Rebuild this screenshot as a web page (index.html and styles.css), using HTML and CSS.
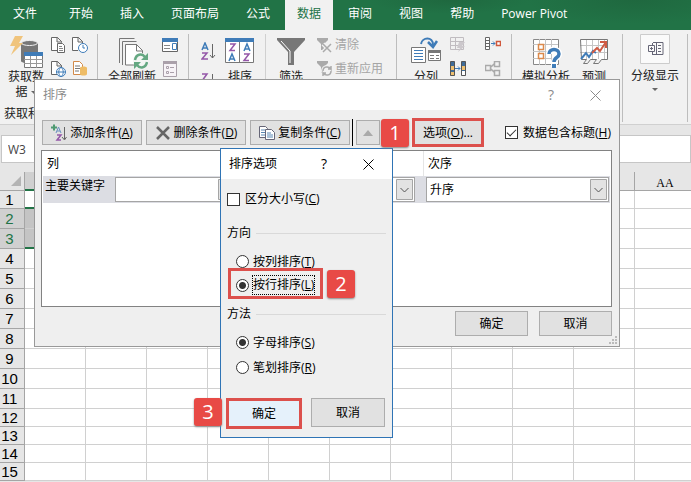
FILE: index.html
```html
<!DOCTYPE html>
<html lang="zh-CN">
<head>
<meta charset="utf-8">
<title>排序</title>
<link rel="stylesheet" href="styles.css">
</head>
<body>
<nav class="tabs">
  <a href="#">文件</a><a href="#">开始</a><a href="#">插入</a><a href="#">页面布局</a><a href="#">公式</a><a href="#" class="active">数据</a><a href="#">审阅</a><a href="#">视图</a><a href="#">帮助</a><a href="#">Power Pivot</a>
</nav>

<section class="ribbon">
  <div class="group g-get">
    <button class="big">
      <svg width="34" height="34" viewBox="0 0 34 34"><path d="M12 8v18c0 3 17 3 17 0V8z" fill="#777"/><ellipse cx="20.500" cy="8" rx="8" ry="2.500" fill="#777" stroke="#f1f1f1"/><path d="M6 1h8l-4 7h4L2 20l4-9H1z" fill="#f0c47c"/><path d="M15.500 17.500h18v15h-18z" fill="#fff" stroke="#777"/><path d="M15 17h19v4H15z" fill="#3f7cb8"/><path d="M15 24.500h19M15 28.500h19M21.500 21v12M27.500 21v12" stroke="#999"/></svg>
      <span>获取数<br>据 <i class="caret"></i></span>
    </button>
    <div class="minis two">
      <button aria-label="从文本"><svg width="16" height="16"><path d="M7.500 13.500h-7v-13h6l4 4v1M6 0v5h5" fill="#fff" stroke="#666"/><path d="M6.500 6.500h5l2 2v7h-7z" fill="#fff" stroke="#666"/><path d="M8 9.500h3M8 11.500h4M8 13.500h4" stroke="#888"/></svg></button>
      <button aria-label="最近使用的源"><svg width="16" height="16"><path d="M6 13.500H.5V.5h6l4 4V6M6 0v5h5" fill="#fff" stroke="#666"/><circle cx="11" cy="11" r="4.500" fill="#fff" stroke="#3f7cb8"/><path d="M11 8v3h2" fill="none" stroke="#3f7cb8"/></svg></button>
      <button aria-label="自网站"><svg width="16" height="16"><path d="M6 13.500H.5V.5h6l4 4V6M6 0v5h5" fill="#fff" stroke="#666"/><circle cx="10" cy="11" r="4.500" fill="#fff" stroke="#3f7cb8"/><path d="M5 11h10M10 6c-3 3-3 7 0 10 3-3 3-7 0-10" fill="none" stroke="#3f7cb8"/></svg></button>
      <button aria-label="现有连接"><svg width="16" height="16"><path d="M1.500.5h6l3 3v10h-9z" fill="#fff" stroke="#d28a4a"/><path d="M3 5h5M3 7.500h5M3 10h4" stroke="#777"/><path d="M8 7v6c0 2 7 2 7 0V7c0-2-7-2-7 0" fill="#eebc66"/></svg></button>
    </div>
    <div class="group-label">获取和转换数据</div>
  </div>

  <div class="group g-refresh">
    <button class="big wide">
      <svg width="32" height="34"><path d="M3.500 28V3.500h15M6.500 30V6.500h14" fill="none" stroke="#777"/><path d="M9.500 30V9.500h11l6 6V30z" fill="#fff" stroke="#777"/><path d="M20.500 9v7h6" fill="none" stroke="#777"/><circle cx="25" cy="26" r="8" fill="#f4f6f4"/><path d="M19 25c1-6 7-7 10-3M31 27c-1 6-7 7-10 3" fill="none" stroke="#65a882" stroke-width="2.500"/><path d="M32 18v7h-7zM18 34v-7h7z" fill="#65a882"/></svg>
      <span>全部刷新</span>
    </button>
    <div class="minis">
      <button aria-label="查询和连接"><svg width="16" height="16"><path d="M.5 2.500h15v12H.5z" fill="#fff" stroke="#666"/><path d="M0 1h16v4H0z" fill="#3f7cb8"/><path d="M2 8.500h6M2 11.500h6" stroke="#888"/><path d="M10.500 6.500v6h4v-6z" fill="#fff" stroke="#3f7cb8"/></svg></button>
      <button aria-label="属性" disabled><svg width="16" height="16"><path d="M1.500.5h13v15h-13z" fill="#f7f3f7" stroke="#aaa0aa"/><path d="M1 0h14v3H1z" fill="#aaa0aa"/><path d="M4.500 5.500h2v2h-2zM4.500 10.500h2v2h-2z" fill="none" stroke="#aaa0aa"/><path d="M8 6.500h4M8 11.500h4" stroke="#aaa0aa"/></svg></button>
    </div>
  </div>

  <div class="group g-sort">
    <div class="minis az">
      <button aria-label="升序"><svg width="16" height="20"><path d="M1 8l3-7 3 7M2 6h4" fill="none" stroke="#3f7cb8" stroke-width="1.500"/><path d="M1 11h5L1 17h6" fill="none" stroke="#9457a8" stroke-width="1.500"/><path d="M11.500 2v14M9 13l2.500 3 2.500-3" fill="none" stroke="#666"/></svg></button>
      <button aria-label="降序"><svg width="16" height="20"><path d="M1 1h5L1 8h6" fill="none" stroke="#9457a8" stroke-width="1.500"/><path d="M1 18l3-7 3 7M2 16h4" fill="none" stroke="#3f7cb8" stroke-width="1.500"/><path d="M11.500 1v15M9 13l2.500 3 2.500-3" fill="none" stroke="#666"/></svg></button>
    </div>
    <button class="big">
      <svg width="30" height="34"><path d="M.5 4.500h28v23H.5z" fill="#fff" stroke="#777"/><path d="M0 3h29v4H0z" fill="#3f7cb8"/><path d="M14.500 7v21" stroke="#777"/><path d="M5 9h5l-5 6.500h5M19 19h5l-5 6.500h5" fill="none" stroke="#9457a8" stroke-width="1.500"/><path d="M4 26l3-7 3 7M5 24h4M19 16l3-7 3 7M20 14h4" fill="none" stroke="#3f7cb8" stroke-width="1.500"/></svg>
      <span>排序</span>
    </button>
    <i class="rule"></i>
    <button class="big">
      <svg width="28" height="34"><path d="M0 3h28v2L17 17v13h-6V17L0 5z" fill="#777"/><path d="M4 6l9 10v12" fill="none" stroke="#fff"/></svg>
      <span>筛选</span>
    </button>
    <div class="minis texts">
      <button disabled><svg width="16" height="16"><path d="M0 1h11v2L7 7v6H4V7L0 3z" fill="#aaa"/><path d="M6 7l8 8M14 7l-8 8" stroke="#f1f1f1" stroke-width="4"/><path d="M6 7l8 8M14 7l-8 8" stroke="#aaa" stroke-width="1.500"/></svg>清除</button>
      <button disabled><svg width="16" height="16"><path d="M0 0h11v2L7 6v6H4V6L0 2z" fill="#aaa"/><circle cx="10" cy="10" r="6" fill="#f1f1f1"/><path d="M6 10c0-5 6-5 8-2V5M14 10c0 5-6 5-8 2v3M14 8h-3M6 12h3" fill="none" stroke="#aaa" stroke-width="1.500"/></svg>重新应用</button>
    </div>
  </div>

  <div class="group g-tools">
    <button class="big">
      <svg width="30" height="34"><path d="M.5 12.500h14v15H.5zM17.500 15.500h12v10h-12z" fill="#fff" stroke="#777"/><path d="M17 15h13v3H17z" fill="#777"/><path d="M3 15.500h9M3 18.500h9M3 21.500h9M3 24.500h9" stroke="#3f7cb8"/><path d="M19 20.500h4M25 20.500h3M19 23.500h4M25 23.500h3" stroke="#777"/><path d="M10 9c1-7 12-8 12 1" fill="none" stroke="#3f7cb8" stroke-width="2"/><path d="M17 7l5 5 4-6" fill="none" stroke="#3f7cb8" stroke-width="2.500"/></svg>
      <span>分列</span>
    </button>
    <div class="minis">
      <button aria-label="快速填充" disabled><svg width="16" height="16"><path d="M.5.500h13v12H.5zM0 4.500h14M0 8.500h10M5.500 0v12" fill="none" stroke="#c0bcc0"/><path d="M9 5h6l-3 4h3l-7 6 2-4H7z" fill="#ccc8cc"/></svg></button>
      <button aria-label="删除重复值"><svg width="16" height="16"><path d="M.5.500h4v14h-4zM11.500.500h4v14h-4z" fill="#3f6c98" stroke="#555"/><path d="M1 5h3v4H1zM1 11h3v3H1zM12 5h3v4h-3z" fill="#efc070"/><path d="M12 10h3v4h-3z" fill="#fff"/><path d="M5 7.500h5M8 5.500l2 2-2 2" fill="none" stroke="#3f7cb8"/></svg></button>
    </div>
    <div class="minis">
      <button aria-label="合并计算"><svg width="16" height="16"><path d="M.5.500h4v12h-4zM0 3.500h4M0 6.500h4M0 9.500h4" fill="#fff" stroke="#666"/><path d="M6 6.500h4M8 4.500l2 2-2 2" fill="none" stroke="#3f7cb8"/><path d="M11.500 4.500h4v4h-4z" fill="#fff" stroke="#d0583c" stroke-width="1.500"/></svg></button>
      <button aria-label="关系" disabled><svg width="16" height="16"><path d="M.5 4.500h5v5h-5zM9.500.500h5v5h-5zM9.500 9.500h5v5h-5zM6 6l3-3M6 8l3 3" fill="none" stroke="#aaa" stroke-width="1.500"/></svg></button>
    </div>
  </div>

  <div class="group g-forecast">
    <button class="big wide">
      <svg width="32" height="34"><path d="M3.500 4.500h25v25h-25z" fill="#fff" stroke="#888"/><path d="M9.500 4v26M15.500 4v26M21.500 4v26M3 9.500h25M3 16.500h25M3 23.500h25" fill="none" stroke="#c4c4c4"/><path d="M8.500 9.500h5v5h-5zM8.500 18.500h5v5h-5z" fill="#fff" stroke="#dc8a4c" stroke-width="1.500"/><path d="M19 19c0-6 10-6 10 0 0 4-5 4-5 8v5" fill="none" stroke="#fff" stroke-width="6"/><path d="M19 19c0-6 10-6 10 0 0 4-5 3-5 8" fill="none" stroke="#3f7cb8" stroke-width="3.500"/><path d="M22 29h4v4h-4z" fill="#3f7cb8"/></svg>
      <span>模拟分析</span>
    </button>
    <button class="big">
      <svg width="28" height="34"><path d="M.5 4.500h27v20H.5z" fill="#fff"/><path d="M6.500 4v20M12.500 4v20M18.500 4v20M24.500 4v20M0 10.500h28M0 17.500h28" fill="none" stroke="#c4c4c4"/><path d="M.5 4.500h27v20h-6l-3 4h-5l3-4h-6l-3 4h-4l3-4h-5z" fill="none" stroke="#777"/><path d="M1 24l5-6 3 4 4-6 3 2" fill="none" stroke="#3f7cb8" stroke-width="2"/><path d="M12 18l5-5 3 3 6-9M20 7h6v6" fill="none" stroke="#cf5b44" stroke-width="2"/></svg>
      <span>预测</span>
    </button>
  </div>

  <div class="group g-outline">
    <button class="big wide outline">
      <svg width="30" height="30"><path d="M.5.500h29v29H.500z" fill="#fafafa" stroke="#ccc"/><path d="M13 8.500h10v12H13M8.500 11.500h6v6h-6zM10 14.500h3M11.500 13v3M16.500 9v12M12.500 9v2M12.500 18v3" fill="none" stroke="#667"/><path d="M18 11.500h3M18 14.500h3M18 17.500h3" stroke="#667"/></svg>
      <span>分级显示</span><i class="caret"></i>
    </button>
  </div>
</section>

<div class="formula-bar">
  <input class="name-box" aria-label="名称框" value="W3">
  <input class="formula" aria-label="编辑栏">
</div>

<main class="sheet"><table>
  <thead><tr><th class="corner"><svg width="10" height="10"><path d="M10 0v10H0z" fill="#b4b4b4"/></svg></th></tr></thead>
  <tbody></tbody>
</table></main>

<section class="dialog sort" role="dialog" aria-label="排序">
  <header><h2>排序</h2><button aria-label="帮助">?</button><button aria-label="关闭"><svg width="11" height="11"><path d="M.5.500l10 10M10.500.500l-10 10" stroke="currentColor"/></svg></button></header>
  <div class="toolbar">
    <button class="btn"><svg width="16" height="17"><path d="M0 3.500h6M3 .5v6" stroke="#4f9a72" stroke-width="2"/><path d="M5 9l2.500-6L10 9M6 7h3" fill="none" stroke="#6a92c0"/><path d="M6 11h4l-4 5h4" fill="none" stroke="#9457a8" stroke-width="1.500"/><path d="M13.500 3v12M11 13l2.500 3 2-3" fill="none" stroke="#666"/></svg><span>添加条件(<u>A</u>)</span></button>
    <button class="btn"><svg width="16" height="16"><path d="M2 2l12 12M14 2L2 14" stroke="#666" stroke-width="2.500"/></svg><span>删除条件(<u>D</u>)</span></button>
    <button class="btn"><svg width="16" height="16"><path d="M.5 1.500h6l2 2v9h-8z" fill="#fff" stroke="#667"/><path d="M2 5h4M2 7.500h4M2 10h4" stroke="#5a88b4"/><path d="M6.500 4.500h6l3 3v7h-9z" fill="#fff" stroke="#667"/><path d="M8 8h4M8 10h6M8 12h6" stroke="#5a88b4"/></svg><span>复制条件(<u>C</u>)</span></button>
    <i class="divider"></i>
    <button class="btn move" aria-label="上移" disabled><svg width="10" height="6"><path d="M0 6l5-6 5 6z" fill="#aaa"/></svg></button>
    <button class="btn move" aria-label="下移" disabled><svg width="10" height="6"><path d="M0 0l5 6 5-6z" fill="#aaa"/></svg></button>
    <button class="btn options marked"><span>选项(<u>O</u>)...</span></button>
    <label class="check"><input type="checkbox" checked><span>数据包含标题(<u>H</u>)</span></label>
  </div>
  <div class="levels">
    <div class="levels-head"><span>列</span><span></span><span>次序</span></div>
    <div class="level">
      <label for="key">主要关键字</label>
      <div class="combo"><select id="key"><option></option></select><svg width="17" height="21"><use href="#drop"/></svg></div>
      <div class="combo"><select aria-label="排序依据"><option></option></select><svg width="17" height="21"><use href="#drop"/></svg></div>
      <div class="combo order"><select aria-label="次序"><option>升序</option></select><svg width="17" height="21"><g id="drop"><path d="M.5.500h16v20H.5z" fill="#e3e3e3" stroke="#a5a5a5"/><path d="M4.500 9l4 4 4-4" fill="none" stroke="#555"/></g></svg></div>
    </div>
  </div>
  <footer><button class="btn">确定</button><button class="btn">取消</button></footer>
  <svg class="grip" width="9" height="9"><path d="M6 0h2v2H6zM3 3h2v2H3zM6 3h2v2H6zM0 6h2v2H0zM3 6h2v2H3zM6 6h2v2H6z" fill="#bbb"/></svg>
</section>

<section class="dialog opts" role="dialog" aria-label="排序选项">
  <header><h2>排序选项</h2><button aria-label="帮助">?</button><button aria-label="关闭"><svg width="11" height="11"><path d="M.5.500l10 10M10.500.500l-10 10" stroke="currentColor"/></svg></button></header>
  <div class="opts-body">
    <label class="check"><input type="checkbox"><span>区分大小写(<u>C</u>)</span></label>
    <div class="section">方向</div>
    <label class="radio"><input type="radio" name="dir"><span>按列排序(<u>T</u>)</span></label>
    <label class="radio marked"><input type="radio" name="dir" checked><span class="focus">按行排序(<u>L</u>)</span></label>
    <div class="section method">方法</div>
    <label class="radio"><input type="radio" name="method" checked><span>字母排序(<u>S</u>)</span></label>
    <label class="radio"><input type="radio" name="method"><span>笔划排序(<u>R</u>)</span></label>
    <div class="actions"><button class="btn primary marked">确定</button><button class="btn">取消</button></div>
  </div>
</section>

<span class="badge one">1</span>
<span class="badge two-b">2</span>
<span class="badge three">3</span>
<script src="script.js"></script>
</body>
</html>
```
FILE: styles.css
```css
* { box-sizing: border-box; }
body {
  margin: 0;
  height: 100vh;
  overflow: hidden;
  position: relative;
  display: flex;
  flex-direction: column;
  background: #e6e6e6;
  color: #222;
  font: 12px/16px "Open Sans", "Noto Sans CJK SC", sans-serif;
}
button, input, select { font: inherit; color: inherit; }
button { padding: 0; border: 0; background: none; }
svg { display: block; flex: none; }
h2 { margin: 0; font: inherit; }

/* Ribbon tabs */
.tabs {
  flex: none;
  display: flex;
  height: 30px;
  padding-left: 1px;
  background:
    radial-gradient(ellipse 110px 24px at 92% 0, #1f683f, transparent),
    radial-gradient(ellipse 80px 14px at 65% 0, #1f683f, transparent),
    #217346;
}
.tabs a { color: #fff; text-decoration: none; line-height: 28px; padding: 0 12px; }
.tabs a:nth-child(2) { margin-left: 8px; }
.tabs a:nth-child(n+3) { margin-left: 3px; }
.tabs a.active { background: #f1f1f1; color: #217346; }

/* Ribbon */
.ribbon {
  flex: none;
  display: flex;
  height: 95px;
  padding: 4px 0 2px;
  background: #f1f1f1;
  border-bottom: 1px solid #d0d0d0;
}
.group {
  display: flex;
  align-items: flex-start;
  position: relative;
  flex: none;
  border-right: 1px solid #bdbdbd;
}
.g-get { width: 98px; padding-left: 6px; gap: 5px; }
.g-refresh { width: 91px; padding-left: 10px; gap: 6px; }
.g-sort { width: 208px; padding-left: 12px; }
.g-tools { width: 115px; padding-left: 14px; gap: 9px; }
.g-tools .minis + .minis { margin-left: 10px; }
.g-forecast { width: 111px; padding-left: 10px; gap: 10px; }
.g-outline { width: 65px; padding-left: 8px; }
.big {
  display: flex;
  flex-direction: column;
  align-items: center;
  line-height: 15px;
  padding-top: 1px;
  white-space: nowrap;
}
.g-get .big { width: 40px; }
.wide { width: 48px; }
.outline { padding-top: 0; }
.outline span { margin-top: 4px; }
.outline .caret { margin-top: 5px; }
.caret {
  display: inline-block;
  border: 3px solid transparent;
  border-top: 3px solid #666;
  border-bottom: 0;
  vertical-align: middle;
}
.minis { display: grid; gap: 8px 5px; padding-top: 3px; }
.minis.two { grid-template-columns: 16px 16px; }
.minis.az { gap: 11px; padding-top: 8px; margin-right: 8px; }
.rule { width: 1px; height: 60px; background: #d0d0d0; margin: 0 11px 0 10px; }
.texts { margin-left: 12px; }
.texts button { display: flex; gap: 2px; color: #a5a5a5; }
.group-label {
  position: absolute;
  left: 4px;
  bottom: 0;
  white-space: nowrap;
}

/* Name box and formula bar */
.formula-bar { flex: none; display: flex; gap: 8px; padding: 10px 0 0 1px; }
.formula-bar input {
  height: 28px;
  padding: 0 6px;
  border: 1px solid #c6c6c6;
  background: #fff;
  color: #444;
}
.name-box { width: 90px; }
.formula { flex: 1; min-width: 0; }

/* Worksheet */
.sheet { flex: 1; min-height: 0; overflow: hidden; padding-top: 9px; }
table { border-collapse: separate; border-spacing: 0; table-layout: fixed; width: 696px; min-width: 100%; }
th, td { padding: 0; border: 0 solid #d0d0d0; border-width: 0 1px 1px 0; }
tr { height: 20px; }
tr.short { height: 18px; }
thead tr { height: 19px; }
th {
  width: 61px;
  background: #e6e6e6;
  border-color: #a5a5a5;
  font-weight: 400;
  color: #000;
}
thead th { font: 12px/14px "Liberation Serif", serif; vertical-align: bottom; }
tbody th { font: 15px/16px "Liberation Sans", sans-serif; padding: 1px 5px 0 0; }
.corner { width: 25px; padding: 0 3px 4px 0; }
.corner svg { margin-left: auto; }
td { background: #fff; }
.on { background: #d0d0d0; color: #217346; }
thead .on { border-bottom: 2px solid #217346; }
td.on { background: #c4c4c4; }
tr.edge td.edge { border-bottom: 2px solid #217346; }

/* Dialogs */
.dialog { position: absolute; background: #efefef; color: #000; }
.dialog header {
  display: flex;
  align-items: center;
  height: 30px;
  background: #fff;
}
.dialog h2 { flex: 1; padding-left: 8px; }
.dialog header button { font-size: 14px; }
.sort { left: 34px; top: 79px; width: 586px; border: 1px solid #999; }
.sort header { color: #8b8b8b; padding-right: 18px; gap: 36px; }
.btn {
  display: flex;
  align-items: center;
  justify-content: center;
  gap: 3px;
  height: 25px;
  border: 1px solid #adadad;
  background: #e1e1e1;
  white-space: nowrap;
}
.marked { border: 3px solid #dc504c; }
.toolbar { display: flex; align-items: center; gap: 4px; padding: 8px 8px 3px 7px; }
.toolbar .btn { width: 100px; }
.divider { width: 1px; height: 27px; margin: 0 -1px 0 -2px; background: #000; }
.toolbar .move { width: 24px; }
.toolbar .options { width: 72px; height: 29px; }
.check { display: flex; align-items: center; gap: 5px; white-space: nowrap; }
.toolbar .check { margin-left: auto; }
input[type="checkbox"], input[type="radio"] {
  appearance: none;
  flex: none;
  width: 13px;
  height: 13px;
  margin: 0;
  border: 1px solid #333;
  background: #fff;
}
input[type="checkbox"]:checked::after {
  content: "";
  display: block;
  width: 8px;
  height: 4px;
  margin: 2px 0 0 1px;
  border: solid #333;
  border-width: 0 0 1px 1px;
  transform: rotate(-45deg);
}
input[type="radio"] { border-radius: 50%; }
input[type="radio"]:checked { background: radial-gradient(circle, #333 0 3px, #fff 4px); }
.levels {
  height: 157px;
  margin: 0 7px 0 6px;
  padding: 0 1px;
  border: 1px solid #828282;
  background: #fff;
}
.levels-head, .level { display: grid; grid-template-columns: 196px 185px 1fr; }
.levels-head span { height: 25px; line-height: 25px; padding-left: 4px; border-right: 1px solid #e5e5e5; }
.levels-head span:last-child { border: 0; }
.level { grid-template-columns: 72px 122px 174px 1fr; background: #dcdde3; height: 27px; }
.level label { padding-left: 2px; line-height: 20px; }
.combo { position: relative; height: 25px; margin-top: 1px; border: 1px solid #a5a5a5; }
.combo:nth-child(3) { margin-left: 4px; margin-right: -4px; }
.combo.order { margin-left: 15px; margin-right: 1px; }
.combo select {
  appearance: none;
  width: 100%;
  height: 23px;
  padding: 0 3px;
  border: 0;
  border-radius: 0;
  background: #fff;
}
.combo svg { position: absolute; right: 1px; top: 1px; pointer-events: none; }
.sort footer { display: flex; justify-content: flex-end; gap: 11px; padding: 4px 7px 10px; }
.sort footer .btn { width: 73px; }
.grip { position: absolute; right: 1px; bottom: 1px; }

.opts { left: 220px; top: 148px; width: 173px; border: 1px solid #2f74b5; }
.opts header { padding-right: 18px; gap: 36px; }
.opts-body { padding: 12px 6px 8px; display: flex; flex-direction: column; }
.section { display: flex; align-items: center; gap: 5px; margin: 18px 0 8px; }
.section::after { content: ""; flex: 1; height: 1px; background: #d9d9d9; }
.method { margin: 7px 0 8px; }
.radio { display: flex; align-items: center; gap: 3px; height: 25px; padding-left: 9px; }
.radio span { border: 1px dotted transparent; line-height: 18px; }
.radio .focus { border-color: #000; }
.radio.marked { width: 95px; height: 31px; margin: -6px 0 0 1px; padding: 3px 0 0 5px; }
.actions { display: grid; grid-template-columns: 76px 74px; gap: 9px; margin: 18px 0 0 -1px; }
.actions .btn { height: 29px; }
.actions .primary { height: 31px; background: #e5f1fb; }

/* Numbered callouts */
.badge {
  position: absolute;
  width: 28px;
  height: 28px;
  border-radius: 3px;
  background: #e84a46;
  box-shadow: 0 1px 2px #888;
  color: #fff;
  font: 20px/27px "Open Sans", sans-serif;
  text-align: center;
}
.one { left: 381px; top: 119px; }
.two-b { left: 327px; top: 270px; }
.three { left: 194px; top: 398px; }
```
FILE: script.js
```js
const columns = ["", "", "", "", "", "", "", "", "", "", "AA"];
const selected = (i) => i <= 6;
const head = document.querySelector("thead tr");
columns.forEach((name, i) => {
  const th = document.createElement("th");
  th.textContent = name;
  if (selected(i)) th.className = "on";
  head.append(th);
});
const body = document.querySelector("tbody");
for (let r = 1; r <= 15; r++) {
  const tr = document.createElement("tr");
  if (r === 1 || r > 11) tr.classList.add("short");
  if (r === 1 || r === 3) tr.classList.add("edge");
  const th = document.createElement("th");
  th.textContent = r;
  const rowOn = r === 2 || r === 3;
  if (rowOn) th.className = "on";
  tr.append(th);
  columns.forEach((_, i) => {
    const td = document.createElement("td");
    if (selected(i)) td.className = rowOn ? "on edge" : "edge";
    tr.append(td);
  });
  body.append(tr);
}
```
